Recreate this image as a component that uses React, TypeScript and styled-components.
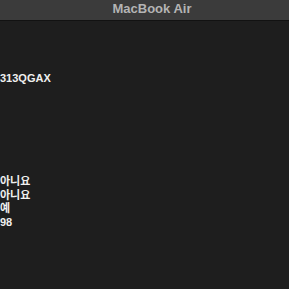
import styled, { createGlobalStyle } from "styled-components";

const GlobalStyle = createGlobalStyle`
   html, body {
      margin: 0;
      padding: 0;
      background: #1e1e1e;
   }
`;

const specs = {
   serial: "313QGAX",
   details: ["아니요", "아니요", "예", "98"],
};

function App() {
   return (
      <>
         <GlobalStyle />
         <Window>
            <TitleBar>MacBook Air</TitleBar>
            <Content>
               <Value>{specs.serial}</Value>
               <Group>
                  {specs.details.map((item, i) => (
                     <Value key={i}>{item}</Value>
                  ))}
               </Group>
            </Content>
         </Window>
      </>
   );
}

export default App;

const Window = styled.div`
   width: 289px;
   height: 289px;
   display: flex;
   flex-direction: column;
   background: #1e1e1e;
   overflow: hidden;
`;

const TitleBar = styled.div`
   height: 21px;
   flex-shrink: 0;
   display: flex;
   align-items: center;
   justify-content: center;
   background: #3b3b3b;
   border-bottom: 1px solid #121212;
   color: #b4b4b4;
   font-family: "Liberation Sans", "Noto Sans", sans-serif;
   font-weight: bold;
   font-size: 13px;
   padding: 0 0 4px 15px;
   box-sizing: border-box;
`;

const Content = styled.div`
   display: flex;
   flex-direction: column;
   padding-top: 51px;
`;

const Group = styled.div`
   display: flex;
   flex-direction: column;
   margin-top: 90px;
`;

const Value = styled.div`
   font-family: "Liberation Sans", "Noto Sans CJK KR", sans-serif;
   font-weight: bold;
   font-size: 11px;
   line-height: 13.4px;
   color: #f0f0f0;
   white-space: nowrap;
`;
